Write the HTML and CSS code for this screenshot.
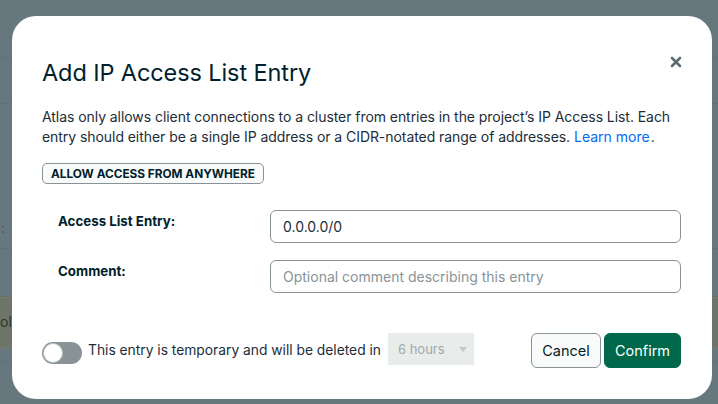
FILE: index.html
```html
<!DOCTYPE html>
<html lang="en">
<head>
<meta charset="utf-8">
<title>Add IP Access List Entry</title>
<link rel="stylesheet" href="styles.css">
</head>
<body>
<div class="page">
  <div class="row r1"></div>
  <div class="row r2"></div>
  <div class="row r3"><span class="bg-colon">:</span></div>
  <div class="row r4"></div>
  <div class="row olive"><span class="bg-text">ol</span></div>
  <div class="row r5"></div>
  <div class="row r6"></div>
</div>

<div class="overlay">
  <div class="modal" role="dialog">
    <button class="close" aria-label="Close">
      <svg width="12" height="12" viewBox="0 0 12 12"><path d="M2 2 L10 10 M10 2 L2 10" stroke="#5d6c74" stroke-width="2.6" stroke-linecap="round"/></svg>
    </button>
    <h1 class="title">Add IP Access List Entry</h1>
    <p class="desc">Atlas only allows client connections to a cluster from entries in the project’s IP Access List. Each entry should either be a single IP address or a CIDR-notated range of addresses. <a href="#" class="link">Learn more</a><span class="dot">.</span></p>
    <button class="allow">ALLOW ACCESS FROM ANYWHERE</button>
    <div class="form">
      <label class="label">Access List Entry:</label>
      <div class="input">0.0.0.0/0</div>
      <label class="label">Comment:</label>
      <div class="input placeholder">Optional comment describing this entry</div>
    </div>
    <div class="footer">
      <div class="temp">
        <span class="toggle"><span class="knob"></span></span>
        <span class="temp-text">This entry is temporary and will be deleted in</span>
        <span class="select">6 hours <span class="caret"></span></span>
      </div>
      <div class="actions">
        <button class="btn cancel">Cancel</button>
        <button class="btn confirm">Confirm</button>
      </div>
    </div>
  </div>
</div>
</body>
</html>
```

FILE: styles.css
```css
* { box-sizing: border-box; }
html, body { margin: 0; padding: 0; }
body {
  width: 718px;
  height: 404px;
  overflow: hidden;
  background: #66777e;
  font-family: "Inter", "Lato", sans-serif;
  color: #001e2b;
}

.page { display: flex; flex-direction: column; }
.row { background: #66777e; border-bottom: 1px solid #5f7078; position: relative; }
.r1 { height: 58px; }
.r2 { height: 46px; }
.r3 { height: 145px; }
.r4 { height: 48px; }
.olive { height: 51px; background: #6c7568; border-top: 1px solid #777c5e; border-bottom: 1px solid #777c5e; }
.r5 { height: 14px; }
.r6 { height: 60px; border-bottom: none; }
.bg-colon { display: block; padding-top: 116px; padding-left: 1px; color: #4d5a60; font-size: 13px; line-height: 16px; }
.bg-text { display: block; padding-top: 15px; font-size: 14px; line-height: 18px; color: #2d3528; }

.overlay {
  position: fixed;
  inset: 0;
  padding: 16px 6px 5px 12px;
}
.modal {
  position: relative;
  width: 700px;
  height: 383px;
  background: #ffffff;
  border-radius: 24px;
  padding: 40px 31px 0 30px;
}
.close {
  position: absolute;
  top: 40px;
  right: 30px;
  width: 12px;
  height: 12px;
  padding: 0;
  border: 0;
  background: none;
  display: flex;
}
.title {
  margin: 0;
  font-size: 23.5px;
  font-weight: 400;
  line-height: 34px;
  color: #001e2b;
  letter-spacing: -0.1px;
}
.desc {
  margin: 17px 0 0;
  font-size: 14px;
  line-height: 20px;
  letter-spacing: -0.06px;
  color: #1c2d38;
}
.link { color: #016bf8; text-decoration: none; letter-spacing: 0; }
.dot { margin-left: 1px; }
.allow {
  margin-top: 16px;
  height: 21px;
  padding: 0 8px;
  border: 1px solid #889397;
  border-radius: 5px;
  background: #f9fbfa;
  font-family: inherit;
  font-size: 11.8px;
  font-weight: 700;
  color: #001e2b;
  display: flex;
  align-items: center;
}
.form {
  margin-top: 26px;
  display: grid;
  grid-template-columns: 212px 1fr;
  row-gap: 17px;
  padding-left: 16px;
}
.label {
  font-size: 13.3px;
  font-weight: 700;
  color: #001e2b;
  padding-top: 3px;
}
.input {
  height: 33px;
  border: 1px solid #889397;
  border-radius: 6px;
  padding: 0 12px;
  display: flex;
  align-items: center;
  font-size: 14px;
  color: #1c2d38;
}
.input.placeholder { color: #889397; }
.footer {
  margin-top: 40px;
  display: flex;
  justify-content: space-between;
  align-items: flex-start;
}
.temp { display: flex; align-items: flex-start; }
.toggle {
  width: 40px;
  height: 22px;
  border-radius: 11px;
  background: #889397;
  padding: 2px;
  display: flex;
  margin-top: 9px;
}
.knob {
  width: 18px;
  height: 18px;
  border-radius: 50%;
  background: #ffffff;
  box-shadow: 0 0 0 1px #c1c7c6;
}
.temp-text {
  margin-left: 6px;
  margin-top: 7px;
  font-size: 13.8px;
  line-height: 20px;
  color: #1c2d38;
}
.select {
  margin-left: 7px;
  width: 86px;
  height: 32px;
  background: #e8edeb;
  color: #a0a8ab;
  font-size: 13px;
  display: flex;
  align-items: center;
  padding-left: 10px;
}
.caret {
  margin-left: 14px;
  width: 0;
  height: 0;
  border-left: 4px solid transparent;
  border-right: 4px solid transparent;
  border-top: 5px solid #c1c7c6;
}
.actions { display: flex; gap: 3px; }
.btn {
  height: 35px;
  border-radius: 6px;
  font-family: inherit;
  font-size: 14.5px;
  padding: 0;
}
.cancel {
  width: 70px;
  border: 1px solid #889397;
  background: #f9fbfa;
  color: #001e2b;
}
.confirm {
  width: 77px;
  border: 1px solid #00684a;
  background: #00684a;
  color: #ffffff;
}
```
